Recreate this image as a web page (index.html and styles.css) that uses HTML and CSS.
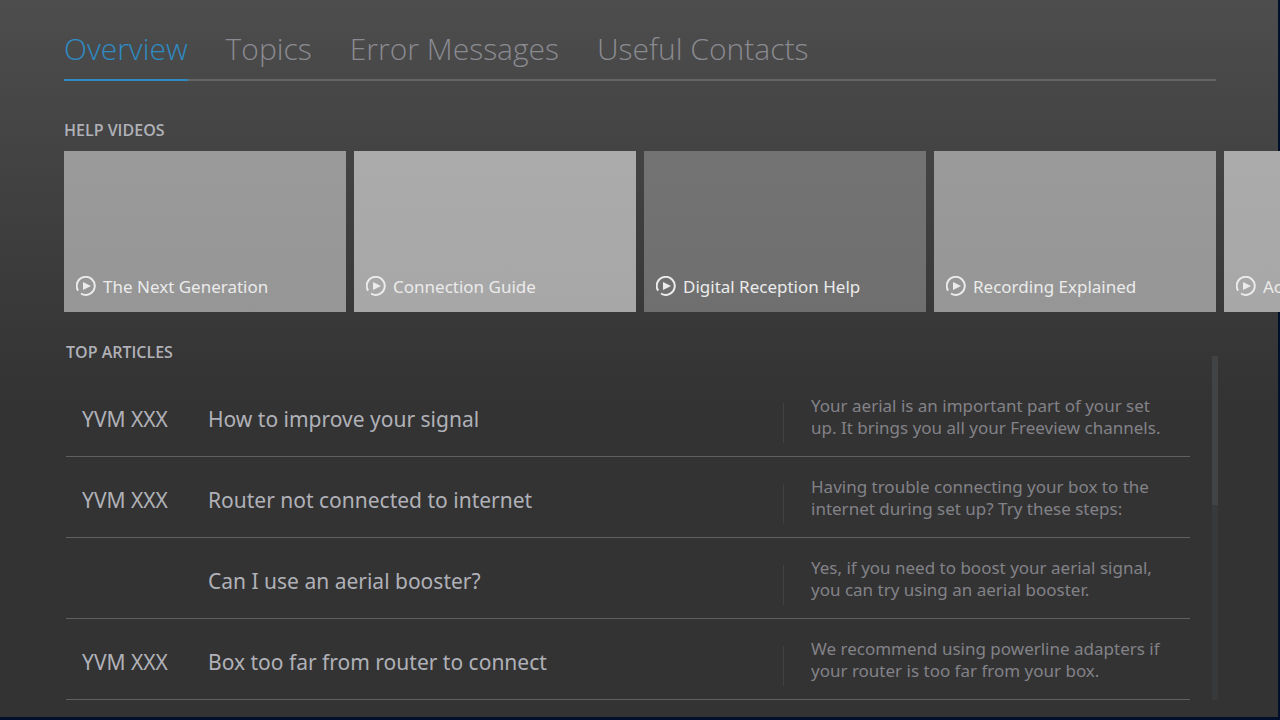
FILE: index.html
```html
<!DOCTYPE html>
<html lang="en">
<head>
<meta charset="utf-8">
<title>Help</title>
<meta name="viewport" content="width=device-width, initial-scale=1">
<link rel="stylesheet" href="styles.css">
</head>
<body>
<svg class="sprite" aria-hidden="true">
  <symbol id="play" viewBox="0 0 20 20">
    <path d="M2.1 14.6A9 9 0 1 1 5 17.5" fill="none" stroke="currentColor" stroke-width="2"/>
    <path d="M7 6L15 10L7 14Z" fill="currentColor"/>
  </symbol>
</svg>
<div class="screen">
  <nav class="tabs">
    <a class="tab tab-active" href="#overview" aria-current="page">Overview</a>
    <a class="tab" href="#topics">Topics</a>
    <a class="tab" href="#errors">Error Messages</a>
    <a class="tab" href="#contacts">Useful Contacts</a>
  </nav>
  <main>
    <section class="videos">
      <h2 class="heading">HELP VIDEOS</h2>
      <div class="carousel">
        <button class="card card-mid" type="button"><svg class="play"><use href="#play"/></svg>The Next Generation</button>
        <button class="card card-light" type="button"><svg class="play"><use href="#play"/></svg>Connection Guide</button>
        <button class="card card-dark" type="button"><svg class="play"><use href="#play"/></svg>Digital Reception Help</button>
        <button class="card card-mid" type="button"><svg class="play"><use href="#play"/></svg>Recording Explained</button>
        <button class="card card-light" type="button"><svg class="play"><use href="#play"/></svg>Ac</button>
      </div>
    </section>
    <section class="articles">
      <div class="article-body">
        <h2 class="heading">TOP ARTICLES</h2>
        <ul class="list">
          <li><a class="row" href="#signal"><span class="code">YVM XXX</span><span class="title">How to improve your signal</span><span class="rule"></span><span class="summary">Your aerial is an important part of your set<br>up. It brings you all your Freeview channels.</span></a></li>
          <li><a class="row" href="#router"><span class="code">YVM XXX</span><span class="title">Router not connected to internet</span><span class="rule"></span><span class="summary">Having trouble connecting your box to the<br>internet during set up? Try these steps:</span></a></li>
          <li><a class="row" href="#booster"><span class="code"></span><span class="title">Can I use an aerial booster?</span><span class="rule"></span><span class="summary">Yes, if you need to boost your aerial signal,<br>you can try using an aerial booster.</span></a></li>
          <li><a class="row" href="#distance"><span class="code">YVM XXX</span><span class="title">Box too far from router to connect</span><span class="rule"></span><span class="summary">We recommend using powerline adapters if<br>your router is too far from your box.</span></a></li>
        </ul>
      </div>
      <div class="track"><div class="thumb"></div></div>
    </section>
  </main>
</div>
</body>
</html>
```
FILE: styles.css
```css
* { box-sizing: border-box; }

body {
  margin: 0;
  background: #000f2b;
  font-family: "Noto Sans", "Open Sans", sans-serif;
  color: #b0b1b8;
  overflow-x: hidden;
}

.sprite { display: none; }

.screen {
  margin: 0 2px 3px 0;
  padding: 0 62px 17px 64px;
  background: linear-gradient(#4d4d4d 0, #333 400px);
}

.tabs {
  display: flex;
  gap: 38px;
  padding-top: 25px;
  border-bottom: 2px solid #646464;
}

.tab {
  margin-bottom: -2px;
  padding-bottom: 6px;
  border-bottom: 2px solid transparent;
  font-family: "Open Sans", sans-serif;
  font-size: 30px;
  font-weight: 300;
  line-height: 48px;
  color: #8a8a91;
  text-decoration: none;
  white-space: nowrap;
}

.tab-active {
  color: #2e8bc4;
  border-color: #2e8bc4;
}

.heading {
  margin: 0;
  font-family: "Open Sans", sans-serif;
  font-size: 16px;
  font-weight: 600;
  line-height: 20px;
}

.videos { padding-top: 39px; }

.carousel {
  display: flex;
  gap: 8px;
  margin-top: 11px;
  margin-right: -64px;
  overflow: hidden;
}

.card {
  flex: 0 0 282px;
  display: flex;
  align-items: flex-end;
  gap: 7px;
  height: 161px;
  padding: 0 12px 14px;
  border: 0;
  font-family: "Noto Sans", sans-serif;
  font-size: 17px;
  line-height: 22px;
  color: #ebebeb;
  text-align: left;
  white-space: nowrap;
}

.card-mid { background: linear-gradient(#9a9a9a, #969696); }
.card-light { background: linear-gradient(#ababab, #a7a7a7); }
.card-dark { background: linear-gradient(#737373, #6f6f6f); }

.play {
  flex: none;
  width: 20px;
  height: 20px;
  margin-bottom: 2px;
}

.articles {
  display: flex;
  justify-content: space-between;
  gap: 22px;
  margin-right: -2px;
  padding: 30px 0 0 2px;
}

.article-body { flex: 1; }

.list {
  margin: 14px 0 0;
  padding: 0;
  list-style: none;
}

.row {
  display: grid;
  grid-template-columns: 126px 1fr 1px 406px;
  align-items: start;
  padding: 19px 0 13px;
  border-bottom: 1px solid #606060;
  color: inherit;
  text-decoration: none;
}

.code,
.title {
  padding-left: 16px;
  font-size: 21px;
  line-height: 48px;
}

.rule {
  align-self: end;
  height: 40px;
  background: #414143;
}

.summary {
  padding-left: 27px;
  font-size: 17px;
  line-height: 22px;
  color: #828288;
  white-space: nowrap;
}

.track {
  width: 6px;
  margin-top: 14px;
  background: #38393b;
}

.thumb {
  height: 149px;
  background: #424345;
}
```
